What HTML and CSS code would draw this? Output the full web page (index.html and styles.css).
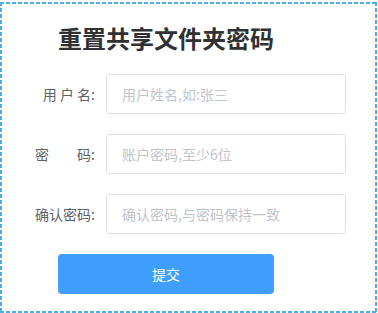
FILE: index.html
```html
<!DOCTYPE html>
<html>
<head>
<meta charset="utf-8">
<link rel="stylesheet" href="styles.css">
</head>
<body>
<div class="box">
  <h2 class="title">重置共享文件夹密码</h2>
  <form class="form">
    <div class="row">
      <label class="label">用 户 名:</label>
      <input class="input" type="text" placeholder="用户姓名,如:张三">
    </div>
    <div class="row">
      <label class="label">密　　码:</label>
      <input class="input" type="password" placeholder="账户密码,至少6位">
    </div>
    <div class="row">
      <label class="label">确认密码:</label>
      <input class="input" type="password" placeholder="确认密码,与密码保持一致">
    </div>
    <button class="submit" type="button">提交</button>
  </form>
</div>
</body>
</html>
```

FILE: styles.css
```css
html, body {
  margin: 0;
  padding: 0;
  background: #fff;
  font-family: "Noto Sans CJK SC", "Noto Sans", sans-serif;
}
.box {
  box-sizing: border-box;
  width: 377px;
  height: 311px;
  margin-top: 2px;
  border: 2px solid transparent;
  background-origin: border-box;
  background-clip: border-box;
  background:
    repeating-linear-gradient(90deg, #4aafe6 0 4px, transparent 4px 6px) left top / 100% 2px no-repeat border-box,
    repeating-linear-gradient(90deg, #4aafe6 0 4px, transparent 4px 6px) left bottom / 100% 2px no-repeat border-box,
    repeating-linear-gradient(180deg, #4aafe6 0 4px, transparent 4px 6px) left top / 2px 100% no-repeat border-box,
    repeating-linear-gradient(180deg, #4aafe6 0 4px, transparent 4px 6px) right top / 2px 100% no-repeat border-box;
  padding: 22px 0 0 0;
}
.title {
  margin: 0 0 0 56px;
  width: 216px;
  text-align: center;
  font-size: 24px;
  line-height: 24px;
  font-weight: bold;
  color: #303133;
}
.form {
  margin-top: 24px;
  display: flex;
  flex-direction: column;
  gap: 20px;
}
.row {
  display: flex;
  align-items: center;
  height: 40px;
}
.label {
  box-sizing: border-box;
  width: 104px;
  padding-right: 11px;
  text-align: right;
  font-size: 14px;
  color: #606266;
}
.input {
  box-sizing: border-box;
  width: 240px;
  height: 40px;
  border: 1px solid #dcdfe6;
  border-radius: 4px;
  padding: 0 15px;
  font-family: inherit;
  font-size: 14px;
  color: #606266;
  outline: none;
}
.input::placeholder {
  color: #c0c4cc;
}
.submit {
  margin-left: 56px;
  width: 216px;
  height: 40px;
  border: none;
  border-radius: 4px;
  background: #409eff;
  color: #fff;
  font-family: inherit;
  font-size: 14px;
  padding: 0;
}
```
